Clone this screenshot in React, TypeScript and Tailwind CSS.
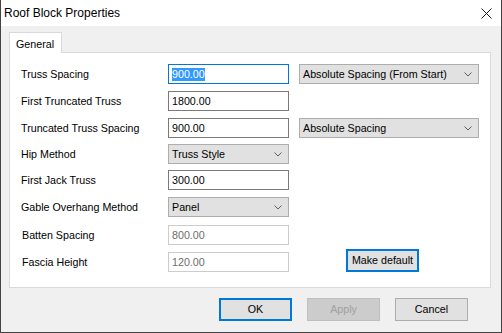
import React from "react";

const Chevron = () => (
  <svg width="8" height="5" viewBox="0 0 8 5" className="shrink-0">
    <polyline points="0.5,0.5 4,4 7.5,0.5" fill="none" stroke="#5f5f5f" strokeWidth="1" />
  </svg>
);

const TextBox = ({ value, disabled, focused }: { value: string; disabled?: boolean; focused?: boolean }) => (
  <div
    className={`w-[121px] h-[20px] bg-white border flex items-center px-[3px] ${
      focused ? "border-[#0078d7]" : disabled ? "border-[#cccccc]" : "border-[#7a7a7a]"
    }`}
  >
    {focused ? (
      <span className="bg-[#3399ff] text-white leading-[13px]">{value}</span>
    ) : (
      <span className={disabled ? "text-[#6d6d6d]" : "text-black"}>{value}</span>
    )}
  </div>
);

const Combo = ({ value, wide }: { value: string; wide?: boolean }) => (
  <div
    className={`${wide ? "w-[180px]" : "w-[121px]"} h-[20px] bg-[#e1e1e1] border border-[#adadad] flex items-center justify-between pl-[3px] pr-[6px]`}
  >
    <span className="text-black">{value}</span>
    <Chevron />
  </div>
);

const Label = ({ children, shift }: { children: React.ReactNode; shift?: boolean }) => (
  <div className={`w-[147px] shrink-0 ${shift ? "pl-[1px]" : ""}`}>{children}</div>
);

export default function App() {
  return (
    <div className="w-[502px] h-[333px] bg-[#f0f0f0] border-l border-r border-b border-[#434343] flex flex-col font-['Liberation_Sans',Arial,sans-serif] text-[10.7px] text-black overflow-hidden">
      {/* Title bar */}
      <div className="h-[26px] bg-white flex items-center justify-between pl-[3px] pr-[9px] shrink-0">
        <span className="text-[12px]">Roof Block Properties</span>
        <svg width="11" height="11" viewBox="0 0 11 11">
          <path d="M0.5 0.5 L10.5 10.5 M10.5 0.5 L0.5 10.5" stroke="#1a1a1a" strokeWidth="1" fill="none" />
        </svg>
      </div>

      {/* Tab strip */}
      <div className="mt-[6px] ml-[8px] flex">
        <div className="w-[53px] h-[21px] bg-white border-l border-t border-r border-[#d9d9d9] flex items-start pt-[3px] pl-[6px] relative z-10 -mb-[1px]">
          General
        </div>
      </div>

      {/* Panel */}
      <div className="ml-[8px] w-[482px] h-[236px] bg-white border border-[#d9d9d9] flex flex-col pl-[11px] pt-[11px] shrink-0">
        <div className="flex items-center h-[20px]">
          <Label>Truss Spacing</Label>
          <TextBox value="900.00" focused />
          <div className="ml-[10px]">
            <Combo value="Absolute Spacing (From Start)" wide />
          </div>
        </div>
        <div className="flex items-center h-[20px] mt-[7px]">
          <Label>First Truncated Truss</Label>
          <TextBox value="1800.00" />
        </div>
        <div className="flex items-center h-[20px] mt-[7px]">
          <Label>Truncated Truss Spacing</Label>
          <TextBox value="900.00" />
          <div className="ml-[10px]">
            <Combo value="Absolute Spacing" wide />
          </div>
        </div>
        <div className="flex items-center h-[20px] mt-[6px]">
          <Label>Hip Method</Label>
          <Combo value="Truss Style" />
        </div>
        <div className="flex items-center h-[20px] mt-[6px]">
          <Label>First Jack Truss</Label>
          <TextBox value="300.00" />
        </div>
        <div className="flex items-center h-[20px] mt-[7px]">
          <Label>Gable Overhang Method</Label>
          <Combo value="Panel" />
        </div>
        <div className="flex items-center h-[20px] mt-[8px]">
          <Label shift>Batten Spacing</Label>
          <TextBox value="800.00" disabled />
        </div>
        <div className="flex items-end mt-[4px]">
          <div className="flex items-center h-[20px]">
            <Label shift>Fascia Height</Label>
            <TextBox value="120.00" disabled />
          </div>
          <div className="ml-[57px] w-[73px] h-[23px] bg-[#e1e1e1] border-2 border-[#0078d7] flex items-center justify-center">
            Make default
          </div>
        </div>
      </div>

      {/* Buttons */}
      <div className="mt-[10px] flex justify-end pr-[33px] gap-[15px]">
        <div className="w-[73px] h-[23px] bg-[#e1e1e1] border-2 border-[#0078d7] flex items-center justify-center">
          OK
        </div>
        <div className="w-[73px] h-[23px] bg-[#cccccc] border border-[#bfbfbf] flex items-center justify-center text-[#a0a0a0]">
          Apply
        </div>
        <div className="w-[73px] h-[23px] bg-[#e1e1e1] border border-[#adadad] flex items-center justify-center">
          Cancel
        </div>
      </div>
    </div>
  );
}
